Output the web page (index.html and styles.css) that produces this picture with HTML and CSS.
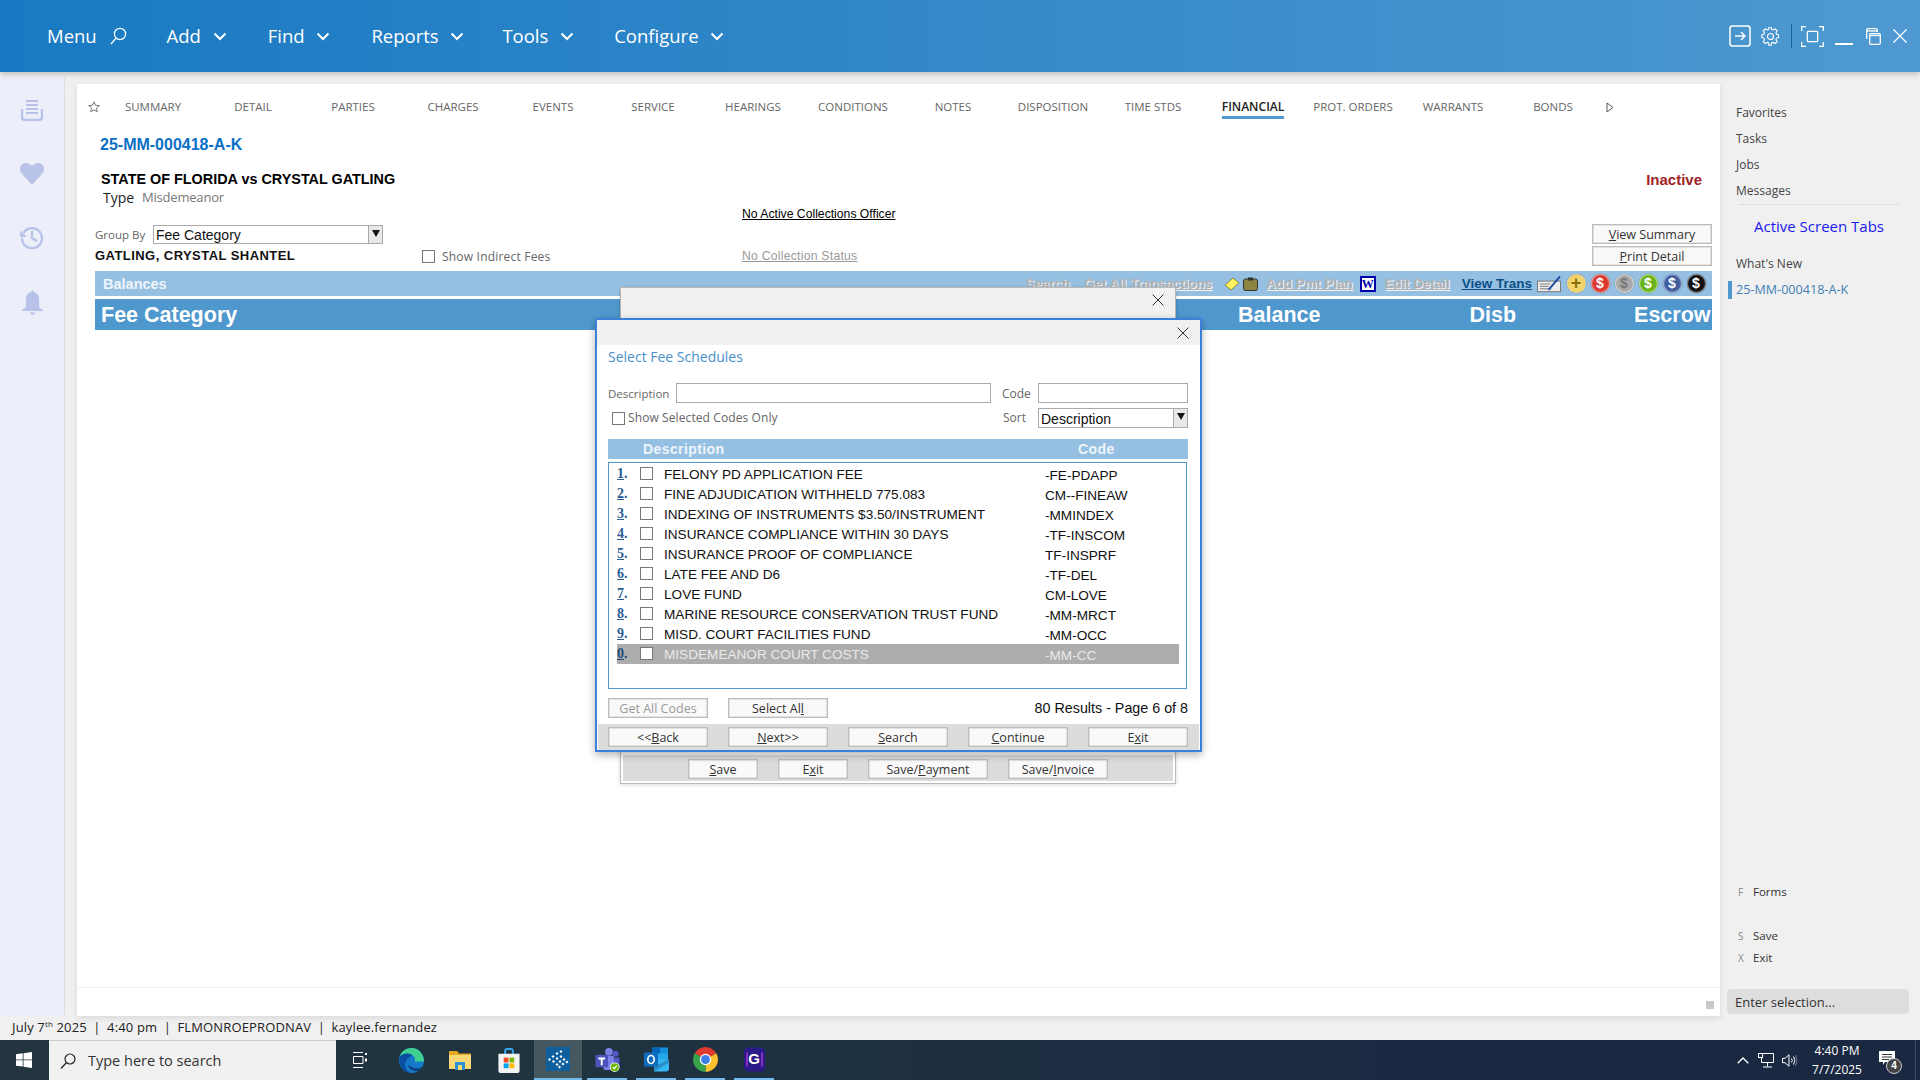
FILE: index.html
```html
<!DOCTYPE html>
<html lang="en">
<head>
<meta charset="utf-8">
<title>Case Financial</title>
<link rel="stylesheet" href="styles.css">
</head>
<body>
<div class="app">
  <header class="topbar">
    <nav class="menu">
      <span class="mi mi-menu">Menu <svg class="ic-search" viewBox="0 0 18 18"><circle cx="11" cy="7" r="5.6"/><path d="M7 11.2 2 17"/></svg></span>
      <span class="mi mi-add">Add <svg class="chev" viewBox="0 0 14 9"><path d="M1.5 1.5 7 7l5.5-5.5"/></svg></span>
      <span class="mi mi-find">Find <svg class="chev" viewBox="0 0 14 9"><path d="M1.5 1.5 7 7l5.5-5.5"/></svg></span>
      <span class="mi mi-reports">Reports <svg class="chev" viewBox="0 0 14 9"><path d="M1.5 1.5 7 7l5.5-5.5"/></svg></span>
      <span class="mi mi-tools">Tools <svg class="chev" viewBox="0 0 14 9"><path d="M1.5 1.5 7 7l5.5-5.5"/></svg></span>
      <span class="mi mi-config">Configure <svg class="chev" viewBox="0 0 14 9"><path d="M1.5 1.5 7 7l5.5-5.5"/></svg></span>
    </nav>
    <div class="winctl">
      <svg class="wc wc-go" viewBox="0 0 22 22"><rect x="1" y="1" width="20" height="20" rx="2.5"/><path d="M6 11h10M12 7l4 4-4 4"/></svg>
      <svg class="wc wc-gear" viewBox="0 0 20 20"><circle cx="10" cy="10" r="3.2"/><path d="M8.4 1.2h3.2l.5 2.4 1.7.7 2.1-1.3 2.2 2.2-1.3 2.1.7 1.7 2.2.6v3l-2.2.6-.7 1.7 1.3 2.1-2.2 2.2-2.1-1.3-1.7.7-.5 2.4H8.4" transform="translate(-.4 -1) scale(.96)"/><path d="M8.4 1.2l-.5 2.4-1.7.7-2.1-1.3-2.2 2.2 1.3 2.1-.7 1.7-2.2.6v3l2.2.6.7 1.7-1.3 2.1 2.2 2.2 2.1-1.3 1.7.7.5 2.4" transform="translate(.6 -1) scale(.96)"/></svg>
      <span class="wc-div"></span>
      <svg class="wc wc-focus" viewBox="0 0 23 21"><path d="M.7 5V.7H5M18 .7h4.3V5M22.3 16v4.3H18M5 20.3H.7V16"/><rect x="6.3" y="5.3" width="10.4" height="10.4" rx="1"/></svg>
      <span class="wc-min"></span>
      <svg class="wc wc-rest" viewBox="0 0 15 17"><path d="M.7 11V2.2Q.7.7 2.2.7h7.6q1.5 0 1.5 1.5V4"/><path d="M.7 3h10.6"/><rect x="3.7" y="5.7" width="10.6" height="10.6" rx="1"/><path d="M3.7 7.5h10.6"/></svg>
      <svg class="wc wc-x" viewBox="0 0 14 14"><path d="M.5.5l13 13M13.5.5l-13 13"/></svg>
    </div>
  </header>

  <div class="mid">
    <aside class="rail">
      <svg viewBox="0 0 22 22"><path class="rf" d="M5 1h12v2H5zM5 5h12v2H5zM5 9h12v2H5zM5 13h12v2H5z"/><path class="rs" d="M1 10v8q0 3 3 3h14q3 0 3-3v-8" /></svg>
      <svg viewBox="0 0 24 22"><path class="rf" d="M12 22 2 11Q0 8.500 0 6.500 0 1 5.500 0 9.500 0 12 3q2.500-3 6.500-3Q24 1 24 6.500q0 2-2 4.500z"/></svg>
      <svg viewBox="0 0 24 24"><path class="rs" d="M3.500 8A10 10 0 1 1 2 13"/><path class="rf" d="M0 5.500 7 12H0z"/><path class="rs" d="M12 6v7l5 3"/></svg>
      <svg viewBox="0 0 22 26"><path class="rf" d="M9.500 2a1.500 1.500 0 0 1 3 0Q18 3.500 18 10v7q0 2 4 4v1H0v-1q4-2 4-4v-7q0-6.500 5.500-8zM8 23.500h6Q13 26 11 26t-3-2.500z"/></svg>
    </aside>

    <main class="panel">
      <div class="tabs">
        <svg class="star" viewBox="0 0 12 12"><path d="M6 .8l1.500 3.500 3.800.3-2.900 2.500.9 3.700L6 8.800 2.700 10.800l.9-3.700L.7 4.600l3.800-.3z"/></svg>
        <span class="tab">SUMMARY</span><span class="tab">DETAIL</span><span class="tab">PARTIES</span><span class="tab">CHARGES</span><span class="tab">EVENTS</span><span class="tab">SERVICE</span><span class="tab">HEARINGS</span><span class="tab">CONDITIONS</span><span class="tab">NOTES</span><span class="tab">DISPOSITION</span><span class="tab">TIME STDS</span><span class="tab"><b class="tab-on">FINANCIAL</b></span><span class="tab">PROT. ORDERS</span><span class="tab">WARRANTS</span><span class="tab">BONDS</span>
        <svg class="tab-more" viewBox="0 0 8 11"><path d="M1 1l6 4.500-6 4.500z"/></svg>
      </div>
      <div class="case-no">25-MM-000418-A-K</div>
      <div class="style-row">
        <span class="case-title">STATE OF FLORIDA vs CRYSTAL GATLING</span>
        <span class="inactive">Inactive</span>
      </div>
      <div class="type-row"><span class="type-k">Type</span><span class="type-v">Misdemeanor</span></div>
      <div class="coll-row"><u class="coll">No Active Collections Officer</u></div>
      <div class="filters">
        <div class="groupby"><span class="lbl">Group By</span><div class="sel sel-g"><span>Fee Category</span><i class="sel-btn"></i></div></div>
        <div></div>
        <button class="btn btn-side" type="button"><u>V</u>iew Summary</button>
        <div class="party-row"><b class="party">GATLING, CRYSTAL SHANTEL</b><span class="cb cb-ind"></span><span class="lbl lbl-sp">Show Indirect Fees</span></div>
        <u class="coll coll-off">No Collection Status</u>
        <button class="btn btn-side" type="button"><u>P</u>rint Detail</button>
      </div>
      <div class="bar">
        <span class="bar-t">Balances</span>
        <div class="tools">
          <span class="lk lk-s">Search</span>
          <u class="lk lk-g">Get All Transactions</u>
          <svg class="ti ti-note" viewBox="0 0 16 14"><path fill="#fff25e" stroke="#8a8a3a" d="M1 8 9 1l6 5-8 7z"/></svg>
          <svg class="ti ti-clip" viewBox="0 0 15 14"><rect x=".5" y="2" width="14" height="11.500" rx="2" fill="#8c8440" stroke="#333"/><rect x="5" y=".5" width="5" height="3" fill="#333"/></svg>
          <u class="lk lk-p">Add Pmt Plan</u>
          <span class="ti-w">W</span>
          <u class="lk lk-e">Edit Detail</u>
          <u class="lk lk-v">View Trans</u>
          <svg class="ti ti-chk" viewBox="0 0 25 18"><rect x=".5" y="6" width="24" height="11" fill="#eee" stroke="#777"/><path stroke="#777" d="M3 9h11M3 11.500h9M3 14h12"/><path stroke="#1a4aa0" stroke-width="2" d="M12 15 24 1"/></svg>
          <span class="coin c-y">+</span><span class="coin c-r">$</span><span class="coin c-g">$</span><span class="coin c-l">$</span><span class="coin c-b">$</span><span class="coin c-k">$</span>
        </div>
      </div>
      <div class="thead">
        <span class="th-main">Fee Category</span>
        <span class="th th-bal">Balance</span>
        <span class="th th-disb">Disb</span>
        <span class="th th-esc">Escrow</span>
      </div>
      <div class="panel-fill"></div>
      <div class="panel-foot"><span class="grip"></span></div>
    </main>

    <aside class="side">
      <ul class="side-list">
        <li>Favorites</li><li>Tasks</li><li>Jobs</li><li>Messages</li>
      </ul>
      <div class="side-rule"></div>
      <div class="side-active">Active Screen Tabs</div>
      <div class="side-new">What's New</div>
      <div class="side-cur">25-MM-000418-A-K</div>
      <div class="side-fill"></div>
      <div class="fk fk-forms"><span>F</span>Forms</div>
      <div class="fk fk-save"><span>S</span>Save</div>
      <div class="fk fk-exit"><span>X</span>Exit</div>
      <div class="side-input">Enter selection...</div>
    </aside>
  </div>

  <div class="status">July 7<sup>th</sup> 2025 <i>|</i> 4:40 pm <i>|</i> FLMONROEPRODNAV <i>|</i> kaylee.fernandez</div>

  <footer class="taskbar">
    <svg class="tb-win" viewBox="0 0 16 16"><path fill="#fff" d="M0 2.300 6.700 1.300V7.500H0zM7.500 1.200 16 0V7.500H7.500zM0 8.300H6.700V14.600L0 13.700zM7.500 8.300H16V16L7.500 14.800z"/></svg>
    <div class="tb-search">
      <svg viewBox="0 0 16 16"><circle cx="10" cy="6" r="5"/><path d="M6.500 9.500 1 15.500"/></svg>
      <span>Type here to search</span>
    </div>
    <svg class="tb-view" viewBox="0 0 16 16"><path fill="none" stroke="#fff" d="M1 .5h10M1 15.500h10M1.500 4.500h9.500v7H1.500z"/><rect x="13" y="1" width="2" height="2" fill="#fff"/><rect x="13" y="6.500" width="2" height="3" fill="#fff"/></svg>
    <span class="tk tk-edge"><svg viewBox="0 0 24 24"><circle cx="12" cy="12" r="12" fill="#1578c9"/><path fill="#3ed08c" d="M24 13C24 6 19 0 12 0 7 0 2 3 1 8c3-3 8-4 12-1 2 1.500 3 4 2 6h8z"/><path fill="#0b4d9e" d="M1 8C-1 15 3 23 11 24c-4-2-6-6-5-10 1-3 3-5 7-7C9 4 4 5 1 8z"/><path fill="#0f3f78" d="M9 16c0 4 4 6 8 6 3 0 5-1 6-4-3 2-7 2-9 1-2-.5-4-2-5-3z"/></svg></span>
    <span class="tk tk-file"><svg viewBox="0 0 22 20"><path fill="#e5a823" d="M0 1h8l2 2.500h12V19H0z"/><path fill="#f9d976" d="M0 5h22v14H0z"/><path fill="#2d8fd5" d="M6 12h10v8H6z"/><rect x="9" y="15" width="4" height="5" fill="#f9d976"/></svg></span>
    <span class="tk tk-store"><svg viewBox="0 0 24 26"><path fill="none" stroke="#37a6e8" stroke-width="2" d="M8 7V3q0-2 2-2h4q2 0 2 2v4"/><path fill="#f3f3f3" d="M1 6h22v18q0 2-2 2H3q-2 0-2-2z"/><rect x="6.500" y="10" width="5" height="5" fill="#f25022"/><rect x="12.500" y="10" width="5" height="5" fill="#7fba00"/><rect x="6.500" y="16" width="5" height="5" fill="#00a4ef"/><rect x="12.500" y="16" width="5" height="5" fill="#ffb900"/></svg></span>
    <span class="tk tk-active"><svg viewBox="0 0 24 24"><rect width="24" height="24" fill="#0f5f9e"/><g fill="#fff"><path d="M15 3l1.500 1.500L15 6l-1.500-1.500zM11 5l1.500 1.500L11 8 9.500 6.500zM7 8l1.500 1.500L7 11 5.500 9.500zM3.500 11l1.500 1.500L3.500 14 2 12.500zM15 8l1.500 1.500L15 11l-1.500-1.500zM11 10l1.500 1.500L11 13l-1.500-1.500zM7.500 13L9 14.500 7.500 16 6 14.500zM18 11l1.500 1.500L18 14l-1.500-1.500zM14 13l1.500 1.500L14 16l-1.500-1.500zM21 13.500l1.500 1.500-1.500 1.500-1.500-1.500zM11 16l1.500 1.500L11 19l-1.500-1.500zM17 15.500l1.500 1.500-1.500 1.500-1.500-1.500zM13.500 18.500l1.500 1.500-1.500 1.500L12 20z"/></g></svg></span>
    <span class="tk tk-teams"><svg viewBox="0 0 25 26"><circle cx="14" cy="5" r="4" fill="#7b83eb"/><circle cx="21" cy="7" r="3" fill="#5059c9"/><path fill="#5059c9" d="M17 11h8v9q0 3-4 3h-4z"/><path fill="#7b83eb" d="M8 9h11v12q0 3-4 3H12q-4 0-4-3z"/><rect y="8" width="13" height="13" rx="1" fill="#4b53bc"/><path fill="#fff" d="M3 11h7v2H7.500v6h-2v-6H3z"/><circle cx="20" cy="21" r="5" fill="#fff"/><circle cx="20" cy="21" r="4.200" fill="#6bb700"/><path fill="none" stroke="#fff" stroke-width="1.200" d="M17.800 21l1.500 1.500 2.800-3"/></svg></span>
    <span class="tk tk-out"><svg viewBox="0 0 25 24"><path fill="#1490df" d="M8 0h16v12H8z"/><path fill="#28a8ea" d="M8 6h8v6H8zM16 6h8v6h-8z"/><path fill="#0364b8" d="M8 0h8v6H8z"/><path fill="#35b8f1" d="M10 11l15 1v9q0 3-3 3H10z"/><path fill="#0a2767" opacity=".3" d="M10 24l15-9v-3l-15 7z"/><rect y="5" width="14" height="14" rx="1" fill="#0f6cbd"/><ellipse cx="7" cy="12" rx="3.200" ry="4" fill="none" stroke="#fff" stroke-width="1.700"/></svg></span>
    <span class="tk tk-chrome"><svg viewBox="0 0 24 24"><path fill="#e03a2f" d="M12 12 1.610 6A12 12 0 0 1 22.390 6z"/><path fill="#fbc02d" d="M12 12 22.390 6A12 12 0 0 1 12 24z"/><path fill="#37a44c" d="M12 12V24A12 12 0 0 1 1.610 6z"/><circle cx="12" cy="12" r="5.500" fill="#fff"/><circle cx="12" cy="12" r="4.300" fill="#3d7fe6"/></svg></span>
    <span class="tk tk-app"><svg viewBox="0 0 21 24"><path fill="#2d1a8a" d="M3 0h15l3 3v18l-3 3H3l-3-3V3z"/><path fill="#c040d8" d="M2 5h2v14H2zM17 5h2v14h-2z" opacity=".6"/></svg><span class="tk-g">G</span></span>
    <div class="tray">
      <svg class="tr-up" viewBox="0 0 12 7"><path d="M.7 6.300 6 1l5.300 5.300"/></svg>
      <svg class="tr-net" viewBox="0 0 16 15"><path d="M3.500.5h12v9h-12zM9.500 9.500v4M5 14h9"/><rect x=".5" y=".5" width="4" height="4" fill="#1a2842"/></svg>
      <svg class="tr-vol" viewBox="0 0 16 13"><path d="M.5 4.300h2.500L7 .8v11.400L3 8.700H.5zM9.500 4.500q1.500 2 0 4M11.500 2.500q2.500 4 0 8" /><path d="M13.500 1q3 5.500 0 11" opacity=".4"/></svg>
      <div class="clock"><span>4:40 PM</span><span>7/7/2025</span></div>
      <div class="notif"><svg viewBox="0 0 16 14"><path fill="#fff" d="M0 0h16v11H6l-2 3v-3H0z"/><path stroke="#333" d="M3 3.500h10M3 6h10M3 8.500h7"/></svg><span class="badge">4</span></div>
      <span class="tr-end"></span>
    </div>
  </footer>

  <section class="dlg dlg-back">
    <div class="dlg-head"><svg class="dlg-x" viewBox="0 0 12 12"><path d="M.5.5l11 11M11.500.5l-11 11"/></svg></div>
    <div class="dlg-back-fill"></div>
    <div class="dlg-back-foot">
      <button class="btn b-save" type="button"><u>S</u>ave</button>
      <button class="btn b-exit" type="button">E<u>x</u>it</button>
      <button class="btn b-pay" type="button">Save/<u>P</u>ayment</button>
      <button class="btn b-inv" type="button">Save/<u>I</u>nvoice</button>
    </div>
  </section>

  <section class="dlg dlg-front">
    <div class="dlg-head dlg-head-f"><svg class="dlg-x" viewBox="0 0 12 12"><path d="M.5.5l11 11M11.500.5l-11 11"/></svg></div>
    <div class="dlg-body">
      <div class="dlg-title">Select Fee Schedules</div>
      <div class="f-row f-row-1">
        <span class="f-lbl f-desc">Description</span><span class="inp inp-desc"></span>
        <span class="f-lbl f-code">Code</span><span class="inp inp-code"></span>
      </div>
      <div class="f-row f-row-2">
        <span class="cb cb-sel"></span><span class="f-lbl f-show">Show Selected Codes Only</span>
        <span class="f-lbl f-sort">Sort</span>
        <div class="sel sel-s"><span>Description</span><i class="sel-btn"></i></div>
      </div>
      <div class="list-head"><span class="lh-d">Description</span><span class="lh-c">Code</span></div>
      <div class="list">
        <div class="row"><u class="n">1</u><b class="dot">.</b><span class="cb"></span><span class="d">FELONY PD APPLICATION FEE</span><span class="c">-FE-PDAPP</span></div>
        <div class="row"><u class="n">2</u><b class="dot">.</b><span class="cb"></span><span class="d">FINE ADJUDICATION WITHHELD 775.083</span><span class="c">CM--FINEAW</span></div>
        <div class="row"><u class="n">3</u><b class="dot">.</b><span class="cb"></span><span class="d">INDEXING OF INSTRUMENTS $3.50/INSTRUMENT</span><span class="c">-MMINDEX</span></div>
        <div class="row"><u class="n">4</u><b class="dot">.</b><span class="cb"></span><span class="d">INSURANCE COMPLIANCE WITHIN 30 DAYS</span><span class="c">-TF-INSCOM</span></div>
        <div class="row"><u class="n">5</u><b class="dot">.</b><span class="cb"></span><span class="d">INSURANCE PROOF OF COMPLIANCE</span><span class="c">TF-INSPRF</span></div>
        <div class="row"><u class="n">6</u><b class="dot">.</b><span class="cb"></span><span class="d">LATE FEE AND D6</span><span class="c">-TF-DEL</span></div>
        <div class="row"><u class="n">7</u><b class="dot">.</b><span class="cb"></span><span class="d">LOVE FUND</span><span class="c">CM-LOVE</span></div>
        <div class="row"><u class="n">8</u><b class="dot">.</b><span class="cb"></span><span class="d">MARINE RESOURCE CONSERVATION TRUST FUND</span><span class="c">-MM-MRCT</span></div>
        <div class="row"><u class="n">9</u><b class="dot">.</b><span class="cb"></span><span class="d">MISD. COURT FACILITIES FUND</span><span class="c">-MM-OCC</span></div>
        <div class="row row-sel"><u class="n">0</u><b class="dot">.</b><span class="cb"></span><span class="d">MISDEMEANOR COURT COSTS</span><span class="c">-MM-CC</span></div>
      </div>
      <div class="list-actions">
        <button class="btn btn-m btn-off" type="button">Get All Codes</button>
        <button class="btn btn-m" type="button">Select Al<u>l</u></button>
        <span class="results">80 Results - Page 6 of 8</span>
      </div>
    </div>
    <div class="dlg-foot">
      <button class="btn btn-m" type="button">&lt;&lt;<u>B</u>ack</button>
      <button class="btn btn-m" type="button"><u>N</u>ext&gt;&gt;</button>
      <button class="btn btn-m" type="button"><u>S</u>earch</button>
      <button class="btn btn-m" type="button"><u>C</u>ontinue</button>
      <button class="btn btn-m" type="button">E<u>x</u>it</button>
    </div>
  </section>
</div>
</body>
</html>
```

FILE: styles.css
```css
* { box-sizing: border-box; }
html, body { margin: 0; padding: 0; }
body { width: 1920px; height: 1080px; overflow: hidden; background: #f0f0f0; font-family: "Open Sans", "Noto Sans", sans-serif; color: #333; }
svg { display: block; flex: none; }
.app { position: relative; width: 1920px; height: 1080px; display: flex; flex-direction: column; }

/* top bar */
.topbar { position: relative; z-index: 2; height: 72px; flex: none; display: flex; align-items: center; background: linear-gradient(90deg, #1979c2, #4e99d0); box-shadow: 0 2px 6px rgba(0,0,0,.22); color: #fff; }
.menu { display: flex; align-items: center; padding-left: 47px; }
.mi { display: flex; align-items: center; font-size: 18.5px; line-height: 24px; white-space: pre; }
.mi svg { stroke: #fff; fill: none; }
.mi .ic-search { width: 18px; height: 18px; margin-left: 7px; stroke-width: 1.3; }
.mi .chev { width: 14px; height: 9px; margin-left: 7px; stroke-width: 2; }
.mi-add { margin-left: 40px; }
.mi-find { margin-left: 41px; }
.mi-reports { margin-left: 41px; }
.mi-tools { margin-left: 38px; }
.mi-config { margin-left: 40px; }
.winctl { margin-left: auto; display: flex; align-items: center; padding-right: 13px; }
.wc { stroke: #fff; fill: none; stroke-width: 1.3; }
.wc-go { width: 22px; height: 22px; margin-right: 10px; stroke-width: 1.5; }
.wc-gear { width: 19px; height: 19px; stroke-width: 1.2; margin-right: 11px; }
.wc-div { width: 1.5px; height: 24px; background: #1d5f96; margin-right: 9px; }
.wc-focus { width: 23px; height: 21px; margin-right: 11px; }
.wc-min { width: 18px; height: 2px; background: #fff; margin: 16px 13px 0 0; }
.wc-rest { width: 15px; height: 17px; margin-right: 12px; }
.wc-x { width: 14px; height: 14px; }

/* middle */
.mid { flex: 1; min-height: 0; display: flex; }
.rail { width: 65px; flex: none; margin-top: 6px; background: #eceff9; border-right: 1px solid #dcdcdc; display: flex; flex-direction: column; align-items: center; padding-top: 21px; }
.rail svg { width: 22px; height: 22px; margin-bottom: 42px; }
.rail svg:nth-child(2) { width: 24px; margin-bottom: 40px; }
.rail svg:nth-child(3) { width: 24px; height: 24px; margin-bottom: 41px; }
.rail svg:nth-child(4) { width: 21px; height: 25px; }
.rf { fill: #b9c2e8; }
.rs { fill: none; stroke: #b9c2e8; stroke-width: 2.4; }

/* panel */
.panel { width: 1643px; flex: none; margin: 12px 0 0 12px; background: #fff; box-shadow: 0 2px 6px rgba(0,0,0,.1); padding: 12px 8px 0 18px; display: flex; flex-direction: column; }
.tabs { height: 22px; flex: none; display: flex; align-items: center; position: relative; padding-left: 8px; }
.star { position: absolute; left: -7px; top: 5px; width: 12px; height: 12px; fill: none; stroke: #777; stroke-width: 1; }
.tab { width: 100px; flex: none; text-align: center; font-size: 11.5px; color: #666; line-height: 22px; white-space: nowrap; }
.tab-on { display: inline-block; font-weight: 600; font-size: 12px; color: #222; line-height: 19px; border-bottom: 3px solid #4f98ce; }
.tab-more { width: 8px; height: 11px; margin-left: 3px; fill: none; stroke: #555; }
.case-no { margin: 16px 0 0 5px; height: 20px; font: bold 16px/21px "Liberation Sans", Arial, sans-serif; color: #0a70c5; }
.style-row { margin-top: 17px; height: 16px; display: flex; justify-content: space-between; padding: 0 10px 0 6px; }
.case-title { font: bold 14.4px/16px "Liberation Sans", Arial, sans-serif; color: #000; }
.inactive { font: bold 15px/17px "Liberation Sans", Arial, sans-serif; color: #a02424; }
.type-row { margin: 2px 0 0 8px; height: 16px; display: flex; align-items: center; font-size: 14px; }
.type-k { color: #222; width: 39px; }
.type-v { color: #777; font-size: 13px; letter-spacing: -.2px; }
.coll-row { height: 18px; padding-left: 647px; display: flex; align-items: center; }
.coll { font: 12.2px/16px "Liberation Sans", Arial, sans-serif; color: #000; }
.coll-off { color: #999; align-self: center; letter-spacing: .25px; }
.filters { margin-top: 1px; display: grid; grid-template-columns: 647px 1fr 120px; grid-template-rows: 20px 20px; row-gap: 2px; }
.groupby { display: flex; align-items: center; }
.lbl { font-size: 11.5px; color: #666; }
.groupby .lbl { width: 58px; }
.sel { position: relative; display: flex; align-items: center; background: #fff; border: 1px solid #aaa; font: 14px/18px "Liberation Sans", Arial, sans-serif; color: #111; padding: 1px 0 0 2px; }
.sel-g { width: 230px; height: 19px; }
.sel-btn { position: absolute; right: 0; top: 0; bottom: 0; width: 14px; background: #e8e8e8; border-left: 1px solid #aaa; }
.sel-btn::after { content: ""; position: absolute; left: 3px; top: 4px; border: 4px solid transparent; border-top: 7px solid #111; border-bottom: 0; }
.party-row { display: flex; align-items: center; }
.party { font: bold 13px/18px "Liberation Sans", Arial, sans-serif; color: #111; letter-spacing: .45px; width: 327px; }
.cb { display: block; flex: none; width: 13px; height: 13px; background: #fff; border: 1px solid #777; }
.lbl-sp { margin-left: 7px; font-size: 12px; letter-spacing: .2px; }
.btn { display: block; flex: none; margin: 0; padding: 2px 0 0; height: 20px; background: #f9f9f9; border: 1px solid #bdbdbd; box-shadow: inset 0 0 0 .5px #ccc; font: 12.5px/16px "Open Sans", "Noto Sans", sans-serif; color: #333; text-align: center; }
.btn-side { width: 120px; }
.bar { margin-top: 5px; height: 25px; flex: none; background: #95c0e2; display: flex; align-items: center; padding: 0 5px 0 8px; }
.bar-t { font: bold 14.5px/26px "Liberation Sans", Arial, sans-serif; color: #eef5fb; }
.tools { margin-left: auto; display: flex; align-items: center; font: bold 13.3px/16px "Liberation Sans", Arial, sans-serif; }
.lk { color: #b0b0b0; text-shadow: 1px 1px 0 #f2f2f2; white-space: nowrap; }
.lk-s { margin-right: 14px; }
.lk-g { margin-right: 12px; }
.ti-note { width: 16px; height: 14px; margin-right: 3px; }
.ti-clip { width: 15px; height: 14px; margin-right: 8px; }
.lk-p { margin-right: 7px; }
.ti-w { width: 16px; height: 16px; margin-right: 9px; background: #fff; border: 2px solid #0000aa; color: #0000aa; font: bold 12px/12px "Liberation Serif", serif; text-align: center; }
.lk-e { margin-right: 12px; }
.lk-v { color: #0c4f88; font-size: 13.5px; text-shadow: none; margin-right: 5px; }
.ti-chk { width: 24px; height: 18px; margin-right: 3px; }
.coin { width: 19px; height: 19px; border-radius: 50%; margin: 0 2.5px; font: bold 14px/19px "Liberation Sans", Arial, sans-serif; text-align: center; color: #fff; box-shadow: inset 0 0 0 1px rgba(255,255,255,.45), 0 0 0 .5px rgba(0,0,0,.25); }
.coin:last-child { margin-right: 1.5px; }
.c-y { background: radial-gradient(circle, #f2d66e 50%, #c49a1c); color: #8f6d08; font-size: 18px; }
.c-r { background: radial-gradient(circle, #d9392f 50%, #e9796f); }
.c-g { background: radial-gradient(circle, #a8a8a8 50%, #c9c9c9); color: #777; }
.c-l { background: radial-gradient(circle, #68b31b 50%, #a3dc55); }
.c-b { background: radial-gradient(circle, #3f5c9e 50%, #8098cb); }
.c-k { background: radial-gradient(circle, #111 55%, #555); }
.thead { margin-top: 3px; height: 31px; flex: none; background: #4f98ce; display: flex; align-items: center; color: #fff; font: bold 21.5px/32px "Liberation Sans", Arial, sans-serif; padding-left: 6px; white-space: nowrap; }
.th-main { width: 1137px; }
.th-disb { margin-left: 149px; }
.th-esc { margin-left: 118px; }
.panel-fill { flex: 1; }
.panel-foot { height: 29px; flex: none; margin: 0 -8px 0 -18px; border-top: 1px solid #f0f0f0; display: flex; justify-content: flex-end; align-items: flex-start; padding: 13px 6px 0 0; }
.grip { width: 8px; height: 8px; background: #c8c8c8; }

/* side */
.side { flex: 1; min-width: 0; display: flex; flex-direction: column; padding: 28px 11px 2px 7px; font-size: 12px; color: #444; }
.side-list { list-style: none; margin: 0; padding: 0 0 0 9px; }
.side-list li { height: 26px; line-height: 26px; }
.side-rule { margin: 0 0 0 12px; width: 161px; height: 1px; background: #dfdfdf; }
.side-active { margin: 11px 0 0 27px; font-size: 15px; line-height: 20px; color: #1a1aee; white-space: nowrap; }
.side-new { margin: 18px 0 0 9px; line-height: 20px; }
.side-cur { margin: 7px 0 0 1px; height: 18px; line-height: 18px; padding-left: 4px; border-left: 4px solid #4f98ce; color: #3f7fb5; font-size: 12.6px; white-space: nowrap; }
.side-fill { flex: 1; }
.fk { display: flex; line-height: 16px; font-size: 11.5px; color: #333; }
.fk span { width: 15px; margin-left: 11px; color: #888; font-size: 10px; }
.fk-save { margin-top: 28px; }
.fk-exit { margin-top: 6px; }
.side-input { margin-top: 23px; height: 25px; background: #dedede; border-radius: 4px; padding-left: 8px; font-size: 13px; line-height: 26px; color: #333; width: 182px; }

/* status */
.status { height: 24px; flex: none; padding-left: 12px; font-size: 13px; letter-spacing: .14px; line-height: 22px; color: #222; white-space: pre; }
.status sup { font-size: 8px; line-height: 0; }
.status i { font-style: normal; margin: 0 3px; }

/* taskbar */
.taskbar { height: 40px; flex: none; display: flex; align-items: center; position: relative; background: linear-gradient(90deg, #23363f, #1f3340 30%, #1a2842 80%); color: #fff; }
.tb-win { width: 16px; height: 16px; margin-left: 16px; }
.tb-search { width: 287px; height: 40px; margin-left: 17px; background: #f1f1f1; border-top: 1px solid #ccc; display: flex; align-items: center; padding-left: 11px; color: #333; font-size: 14.5px; }
.tb-search svg { width: 16px; height: 16px; fill: none; stroke: #222; stroke-width: 1.2; margin-right: 12px; }
.tb-view { width: 16px; height: 16px; margin-left: 16px; }
.tk { position: relative; height: 40px; display: flex; align-items: center; justify-content: center; flex: none; border-bottom: 2px solid #76b9ed; }
.tk-edge { margin-left: 31px; width: 25px; border-bottom: 0; }
.tk-file { margin-left: 25px; width: 22px; border-bottom: 0; }
.tk-store { margin-left: 26px; width: 24px; border-bottom: 0; }
.tk-active { margin-left: 13px; width: 48px; background: #45585f; }
.tk-teams { margin-left: 5px; width: 40px; }
.tk-out { margin-left: 9px; width: 40px; }
.tk-chrome { margin-left: 9px; width: 40px; }
.tk-app { margin-left: 9px; width: 40px; }
.tk svg { height: 25px; width: 25px; }
.tk-file svg { width: 22px; height: 20px; }
.tk-store svg { width: 24px; }
.tk-active svg { width: 24px; height: 24px; }
.tk-g { position: absolute; left: 0; right: 0; top: 9px; text-align: center; color: #fff; font: bold 15px/20px "Liberation Sans", Arial, sans-serif; }
.tk-app svg { width: 21px; }
.tray { margin-left: auto; display: flex; align-items: center; height: 40px; }
.tr-up { width: 12px; height: 7px; fill: none; stroke: #fff; stroke-width: 1.3; margin-right: 9px; }
.tr-net { width: 16px; height: 15px; fill: none; stroke: #fff; margin-right: 8px; }
.tr-vol { width: 16px; height: 13px; fill: none; stroke: #fff; margin-right: 8px; }
.clock { width: 62px; display: flex; flex-direction: column; align-items: center; font-size: 12px; line-height: 19px; }
.notif { position: relative; width: 16px; height: 14px; margin: 0 20px 4px 11px; }
.notif svg { width: 16px; height: 14px; }
.badge { position: absolute; left: 7px; top: 7px; width: 16px; height: 16px; border-radius: 50%; background: #444; border: 1px solid #ccc; font: bold 10px/14px "Liberation Sans", Arial, sans-serif; text-align: center; color: #fff; }
.tr-end { width: 1px; height: 40px; background: #3f4d66; margin-right: 4px; }

/* dialogs */
.dlg { position: absolute; display: flex; flex-direction: column; }
.dlg-back { left: 620px; top: 287px; width: 556px; height: 497px; background: #fff; border: 1px solid #bbb; z-index: 3; box-shadow: 0 1px 4px rgba(0,0,0,.15); }
.dlg-head { position: relative; height: 31px; flex: none; background: #f1f1f1; box-shadow: 0 3px 4px rgba(0,0,0,.12); }
.dlg-x { position: absolute; right: 11px; top: 6px; width: 12px; height: 12px; fill: none; stroke: #333; stroke-width: 1; }
.dlg-back-fill { flex: 1; }
.dlg-back-foot { height: 26px; flex: none; margin: 0 2px 2px; background: #dcdcdc; display: flex; align-items: flex-start; padding: 4px 0 0 65px; }
.b-save { width: 70px; }
.b-exit { width: 70px; margin-left: 20px; }
.b-pay { width: 120px; margin-left: 20px; }
.b-inv { width: 100px; margin-left: 20px; }
.dlg-front { left: 595px; top: 318px; width: 607px; height: 434px; background: #fff; border: 2px solid #3c80dc; z-index: 4; box-shadow: 0 3px 8px rgba(0,0,0,.3); }
.dlg-head-f { height: 25px; box-shadow: none; }
.dlg-head-f .dlg-x { right: 11px; top: 7px; }
.dlg-body { flex: 1; padding: 0 11px; }
.dlg-title { margin-top: 2px; height: 20px; line-height: 20px; font-size: 14px; color: #4a90c8; }
.f-lbl { font-size: 12px; color: #666; white-space: nowrap; }
.inp { display: block; flex: none; height: 20px; background: #fff; border: 1px solid #aaa; }
.f-row { display: flex; align-items: center; height: 20px; }
.f-row-1 { margin-top: 16px; }
.f-row-2 { margin-top: 5px; }
.f-desc { width: 68px; font-size: 11.5px; }
.inp-desc { width: 315px; }
.f-code { margin-left: 11px; width: 36px; }
.inp-code { width: 150px; }
.f-row-2 .cb { margin-left: 4px; }
.f-show { width: 375px; margin-left: 3px; letter-spacing: .1px; line-height: 22px; }
.f-sort { width: 35px; line-height: 22px; }
.sel-s { width: 150px; height: 20px; }
.list-head { margin-top: 11px; height: 20px; width: 580px; background: #95c0e2; display: flex; font: bold 14px/21px "Liberation Sans", Arial, sans-serif; letter-spacing: .4px; color: #eef5fb; }
.lh-d { margin-left: 35px; width: 435px; }
.list { margin-top: 3px; height: 227px; width: 579px; border: 1px solid #4f98ce; padding: 1px 7px 0 8px; }
.row { height: 20px; display: flex; align-items: center; font: 13.6px/20px "Liberation Sans", Arial, sans-serif; color: #111; white-space: nowrap; }
.row .cb { position: relative; top: -1px; }
.n { font: bold 14px/18px "Liberation Serif", serif; color: #2b5e95; width: 7px; }
.dot { font: bold 14px/18px "Liberation Serif", serif; color: #2b5e95; width: 16px; }
.row .d { position: relative; top: 1px; width: 381px; margin-left: 11px; }
.row .c { position: relative; top: 2px; }
.row-sel { background: #adadad; }
.row-sel .n, .row-sel .dot { color: #1d4a78; }
.row-sel .d, .row-sel .c { color: #e9e9e9; }
.list-actions { margin-top: 9px; display: flex; align-items: center; width: 580px; }
.btn-m { width: 100px; }
.btn-off { color: #999; margin-right: 20px; }
.results { margin-left: auto; font: 14.3px/20px "Liberation Sans", Arial, sans-serif; color: #111; }
.dlg-foot { height: 26px; flex: none; margin: 0 1px; background: #dcdcdc; display: flex; gap: 20px; padding: 3px 0 0 10px; }
```
